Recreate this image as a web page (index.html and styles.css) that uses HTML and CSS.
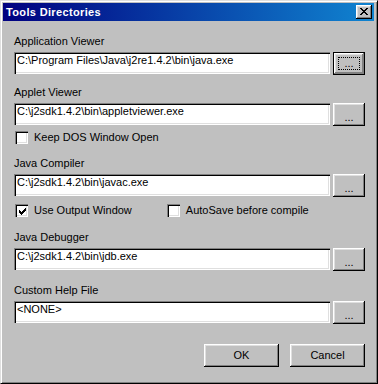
FILE: index.html
```html
<!DOCTYPE html>
<html>
<head>
<meta charset="utf-8">
<link rel="stylesheet" href="styles.css">
</head>
<body>
<div class="window">
  <div class="titlebar">
    <span class="title">Tools Directories</span>
    <span class="close">
      <svg width="8" height="7" viewBox="0 0 8 7"><path d="M0 0h2v1h-2zM6 0h2v1h-2zM1 1h2v1h-2zM5 1h2v1h-2zM2 2h4v1h-4zM3 3h2v1h-2zM2 4h4v1h-4zM1 5h2v1h-2zM5 5h2v1h-2zM0 6h2v1h-2zM6 6h2v1h-2z" fill="#000"/></svg>
    </span>
  </div>
  <div class="content">
    <div class="label l1">Application Viewer</div>
    <div class="row">
      <div class="field">C:\Program Files\Java\j2re1.4.2\bin\java.exe</div>
      <div class="btn small default"><span class="focus">...</span></div>
    </div>

    <div class="label l2">Applet Viewer</div>
    <div class="row">
      <div class="field">C:\j2sdk1.4.2\bin\appletviewer.exe</div>
      <div class="btn small"><span class="dots">...</span></div>
    </div>
    <div class="checks c1">
      <label class="check"><span class="box"></span>Keep DOS Window Open</label>
    </div>

    <div class="label l3">Java Compiler</div>
    <div class="row">
      <div class="field">C:\j2sdk1.4.2\bin\javac.exe</div>
      <div class="btn small"><span class="dots">...</span></div>
    </div>
    <div class="checks c2">
      <label class="check"><span class="box"><svg width="7" height="7" viewBox="0 0 7 7"><path d="M6 0h1v1h-1zM5 1h2v1h-2zM0 2h1v1h-1zM4 2h3v1h-3zM0 3h2v1h-2zM3 3h3v1h-3zM0 4h5v1h-5zM1 5h3v1h-3zM2 6h1v1h-1z" fill="#000"/></svg></span>Use Output Window</label>
      <label class="check second"><span class="box"></span>AutoSave before compile</label>
    </div>

    <div class="label l4">Java Debugger</div>
    <div class="row">
      <div class="field">C:\j2sdk1.4.2\bin\jdb.exe</div>
      <div class="btn small"><span class="dots">...</span></div>
    </div>

    <div class="label l5">Custom Help File</div>
    <div class="row">
      <div class="field">&lt;NONE&gt;</div>
      <div class="btn small"><span class="dots">...</span></div>
    </div>

    <div class="actions">
      <div class="btn wide">OK</div>
      <div class="btn wide">Cancel</div>
    </div>
  </div>
</div>
</body>
</html>
```
FILE: styles.css
```css
html, body {
  margin: 0;
  padding: 0;
  background: #c0c0c0;
}
body {
  font-family: "Liberation Sans", Arial, sans-serif;
  font-size: 11px;
  color: #000;
}
.window {
  width: 378px;
  height: 384px;
  box-sizing: border-box;
  background: #c0c0c0;
  border: 1px solid;
  border-color: #dfdfdf #000 #000 #dfdfdf;
  box-shadow: inset 1px 1px #fff, inset -1px -1px #808080;
  padding: 2px 3px 3px 2px;
  display: flex;
  flex-direction: column;
}
.titlebar {
  height: 18px;
  flex: none;
  background: linear-gradient(to right, #000080, #1084d0);
  display: flex;
  align-items: center;
  justify-content: space-between;
  padding: 0 2px 0 3px;
  color: #fff;
}
.title {
  font-weight: bold;
  font-size: 11px;
  letter-spacing: 0.35px;
  line-height: 13px;
}
.close {
  width: 16px;
  height: 14px;
  box-sizing: border-box;
  background: #c0c0c0;
  box-shadow: inset -1px -1px #000, inset 1px 1px #fff, inset -2px -2px #808080, inset 2px 2px #dfdfdf;
  display: flex;
  align-items: center;
  justify-content: center;
  padding-bottom: 1px;
}
.close svg { display: block; }
.content {
  flex: 1;
  display: flex;
  flex-direction: column;
  padding: 0 9px 0 11px;
}
.label {
  line-height: 13px;
  height: 13px;
  margin-bottom: 4px;
}
.l1 { margin-top: 14px; }
.l2 { margin-top: 11px; }
.l3 { margin-top: 11px; }
.l4 { margin-top: 12px; }
.l5 { margin-top: 13px; }
.row {
  display: flex;
  gap: 2px;
  height: 23px;
}
.field {
  width: 317px;
  height: 22px;
  box-sizing: border-box;
  background: #fff;
  box-shadow: inset 1px 1px #808080, inset 2px 2px #000, inset -1px -1px #fff, inset -2px -2px #dfdfdf;
  padding: 2px 3px 0 3px;
  line-height: 13px;
  white-space: nowrap;
  overflow: hidden;
}
.btn {
  box-sizing: border-box;
  background: #c0c0c0;
  box-shadow: inset -1px -1px #000, inset 1px 1px #fff, inset -2px -2px #808080, inset 2px 2px #dfdfdf;
  display: flex;
  align-items: center;
  justify-content: center;
  line-height: 13px;
}
.btn.small {
  width: 32px;
  height: 23px;
  margin-left: 1px;
}
.btn.small.default {
  border: 1px solid #000;
  box-shadow: inset -1px -1px #808080, inset 1px 1px #fff, inset -2px -2px #808080, inset 2px 2px #dfdfdf;
}
.focus {
  width: 22px;
  height: 13px;
  box-sizing: border-box;
  border: 1px dotted #000;
  display: flex;
  align-items: flex-end;
  justify-content: center;
  line-height: 9px;
  font-size: 11px;
  padding-bottom: 1px;
}
.dots {
  padding-top: 5px;
}
.checks {
  display: flex;
  height: 17px;
  align-items: center;
}
.c1 { margin-top: 3px; }
.c2 { margin-top: 5px; }
.check {
  display: flex;
  align-items: center;
  gap: 6px;
  line-height: 13px;
  padding-left: 1px;
}
.check.second {
  margin-left: 34px;
}
.box {
  width: 13px;
  height: 13px;
  box-sizing: border-box;
  background: #fff;
  box-shadow: inset 1px 1px #808080, inset 2px 2px #000, inset -1px -1px #fff, inset -2px -2px #dfdfdf;
  display: flex;
  align-items: center;
  justify-content: center;
  padding: 1px 0 0 1px;
}
.box svg { display: block; }
.actions {
  margin-top: 20px;
  display: flex;
  justify-content: flex-end;
  gap: 11px;
}
.btn.wide {
  width: 75px;
  height: 23px;
}
```
